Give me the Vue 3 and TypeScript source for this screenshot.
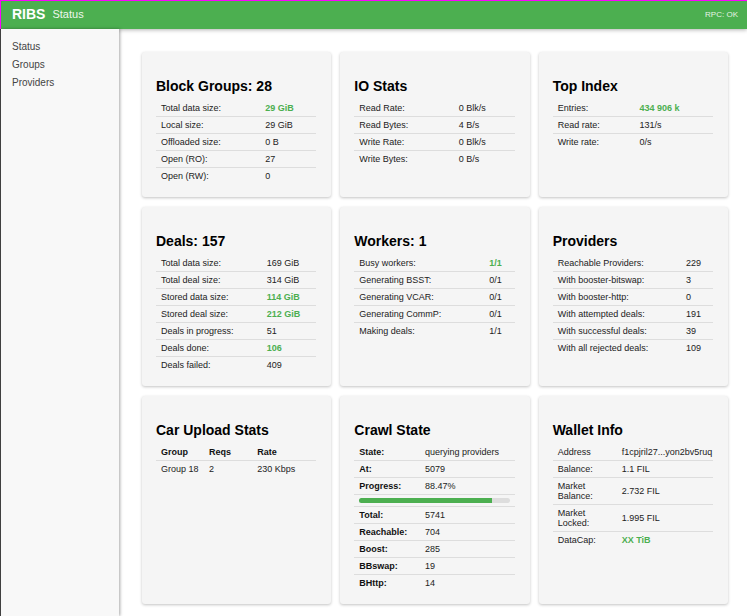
<script setup lang="ts">
interface Cell {
  text: string
  good?: boolean
}

interface Row {
  label: string
  value?: Cell
  progress?: number
}

interface StatCard {
  title: string
  labelWidth: number
  boldLabels?: boolean
  rows: Row[]
}

const row = (label: string, text: string, good = false): Row => ({ label, value: { text, good } })

const navItems: string[] = ['Status', 'Groups', 'Providers']

const overview: StatCard[] = [
  {
    title: 'Block Groups: 28',
    labelWidth: 65,
    rows: [
      row('Total data size:', '29 GiB', true),
      row('Local size:', '29 GiB'),
      row('Offloaded size:', '0 B'),
      row('Open (RO):', '27'),
      row('Open (RW):', '0'),
    ],
  },
  {
    title: 'IO Stats',
    labelWidth: 62,
    rows: [
      row('Read Rate:', '0 Blk/s'),
      row('Read Bytes:', '4 B/s'),
      row('Write Rate:', '0 Blk/s'),
      row('Write Bytes:', '0 B/s'),
    ],
  },
  {
    title: 'Top Index',
    labelWidth: 51,
    rows: [
      row('Entries:', '434 906 k', true),
      row('Read rate:', '131/s'),
      row('Write rate:', '0/s'),
    ],
  },
  {
    title: 'Deals: 157',
    labelWidth: 66,
    rows: [
      row('Total data size:', '169 GiB'),
      row('Total deal size:', '314 GiB'),
      row('Stored data size:', '114 GiB', true),
      row('Stored deal size:', '212 GiB', true),
      row('Deals in progress:', '51'),
      row('Deals done:', '106', true),
      row('Deals failed:', '409'),
    ],
  },
  {
    title: 'Workers: 1',
    labelWidth: 81,
    rows: [
      row('Busy workers:', '1/1', true),
      row('Generating BSST:', '0/1'),
      row('Generating VCAR:', '0/1'),
      row('Generating CommP:', '0/1'),
      row('Making deals:', '1/1'),
    ],
  },
  {
    title: 'Providers',
    labelWidth: 80,
    rows: [
      row('Reachable Providers:', '229'),
      row('With booster-bitswap:', '3'),
      row('With booster-http:', '0'),
      row('With attempted deals:', '191'),
      row('With successful deals:', '39'),
      row('With all rejected deals:', '109'),
    ],
  },
]

const uploads = [{ group: 'Group 18', reqs: 2, rate: '230 Kbps' }]

const details: StatCard[] = [
  {
    title: 'Crawl State',
    labelWidth: 41,
    boldLabels: true,
    rows: [
      row('State:', 'querying providers'),
      row('At:', '5079'),
      row('Progress:', '88.47%'),
      { label: 'Crawl progress', progress: 88.47 },
      row('Total:', '5741'),
      row('Reachable:', '704'),
      row('Boost:', '285'),
      row('BBswap:', '19'),
      row('BHttp:', '14'),
    ],
  },
  {
    title: 'Wallet Info',
    labelWidth: 40,
    rows: [
      row('Address', 'f1cpjril27...yon2bv5ruq'),
      row('Balance:', '1.1 FIL'),
      row('Market Balance:', '2.732 FIL'),
      row('Market Locked:', '1.995 FIL'),
      row('DataCap:', 'XX TiB', true),
    ],
  },
]

type Tile = { kind: 'stats'; card: StatCard } | { kind: 'uploads' }

const tiles: Tile[] = [
  ...overview.map((card): Tile => ({ kind: 'stats', card })),
  { kind: 'uploads' },
  ...details.map((card): Tile => ({ kind: 'stats', card })),
]
</script>

<template>
  <div class="app">
    <header class="topbar">
      <span class="brand">RIBS</span>
      <span class="section">Status</span>
      <span class="rpc">RPC: OK</span>
    </header>
    <div class="body">
      <nav class="sidebar">
        <a v-for="item in navItems" :key="item" class="nav-link" href="#">{{ item }}</a>
      </nav>
      <main class="content">
        <section v-for="(tile, i) in tiles" :key="i" class="card">
          <template v-if="tile.kind === 'stats'">
            <h2 class="title">{{ tile.card.title }}</h2>
            <table class="table" :class="{ strong: tile.card.boldLabels }">
              <colgroup>
                <col :style="{ width: tile.card.labelWidth + '%' }" />
                <col />
              </colgroup>
              <tbody>
                <tr v-for="r in tile.card.rows" :key="r.label">
                  <td v-if="r.progress !== undefined" colspan="2">
                    <div
                      class="track"
                      role="progressbar"
                      :aria-label="r.label"
                      :aria-valuenow="r.progress"
                    >
                      <div class="fill" :style="{ width: r.progress + '%' }"></div>
                    </div>
                  </td>
                  <template v-else>
                    <th class="label" scope="row">{{ r.label }}</th>
                    <td class="value" :class="{ good: r.value?.good }">{{ r.value?.text }}</td>
                  </template>
                </tr>
              </tbody>
            </table>
          </template>
          <template v-else>
            <h2 class="title">Car Upload Stats</h2>
            <table class="table uploads">
              <thead>
                <tr>
                  <th scope="col">Group</th>
                  <th scope="col">Reqs</th>
                  <th scope="col" class="rate">Rate</th>
                </tr>
              </thead>
              <tbody>
                <tr v-for="u in uploads" :key="u.group">
                  <td class="value">{{ u.group }}</td>
                  <td>{{ u.reqs }}</td>
                  <td>{{ u.rate }}</td>
                </tr>
              </tbody>
            </table>
          </template>
        </section>
      </main>
    </div>
  </div>
</template>

<style>
body {
  margin: 0;
  background: #fff;
}
</style>

<style scoped>
.app {
  display: flex;
  flex-direction: column;
  min-height: 100vh;
  font-family: "Liberation Sans", Arial, sans-serif;
  color: #222;
}

.topbar {
  display: flex;
  align-items: center;
  gap: 7px;
  box-sizing: border-box;
  height: 29px;
  padding: 0 9px 2px 11px;
  border-top: 1px solid #f0f;
  border-left: 1px solid #f0f;
  background: #4caf50;
  box-shadow: 0 1px 4px rgba(0, 0, 0, 0.3);
  color: #fff;
}

.brand {
  font-size: 14px;
  font-weight: bold;
}

.section {
  font-size: 11px;
  opacity: 0.9;
}

.rpc {
  margin-left: auto;
  font-size: 8px;
  opacity: 0.85;
}

.body {
  display: flex;
  flex: 1;
  border-left: 1px solid #444;
}

.sidebar {
  position: relative;
  display: flex;
  flex-direction: column;
  flex: 0 0 118px;
  box-sizing: border-box;
  padding: 9px 11px;
  background: #f8f8f8;
  box-shadow: 1px 0 3px rgba(0, 0, 0, 0.35);
}

.nav-link {
  font-size: 10px;
  line-height: 18px;
  color: #444;
  text-decoration: none;
}

.content {
  display: grid;
  flex: 1;
  grid-template-columns: repeat(3, minmax(0, 1fr));
  gap: 10px 9px;
  align-content: start;
  padding: 23px 19px 12px 23px;
}

.card {
  padding: 26px 15px 13px 14px;
  border-radius: 3px;
  background: #f5f5f5;
  box-shadow: 0 1px 3px rgba(0, 0, 0, 0.24);
}

.title {
  margin: 0 0 6px;
  font-size: 14px;
  line-height: 16px;
  color: #000;
}

.table {
  width: 100%;
  border-spacing: 0;
  table-layout: fixed;
  font-size: 9px;
  line-height: 10px;
}

.table th,
.table td {
  padding: 3px 5px;
  border-bottom: 1px solid #ddd;
  text-align: left;
  vertical-align: middle;
}

.table tbody tr:last-child > * {
  border-bottom: 0;
}

.table th {
  color: #111;
}

.table .label {
  font-weight: normal;
  color: #222;
}

.strong .label {
  font-weight: bold;
  color: #111;
}

.table .value {
  padding-right: 0;
  white-space: nowrap;
}

.table .good {
  font-weight: bold;
  color: #4caf50;
}

.uploads th {
  width: 30%;
  box-sizing: border-box;
}

.uploads .rate {
  width: 40%;
}

.track {
  height: 5px;
  overflow: hidden;
  border-radius: 3px;
  background: #ddd;
}

.fill {
  height: 100%;
  background: #4caf50;
}
</style>
